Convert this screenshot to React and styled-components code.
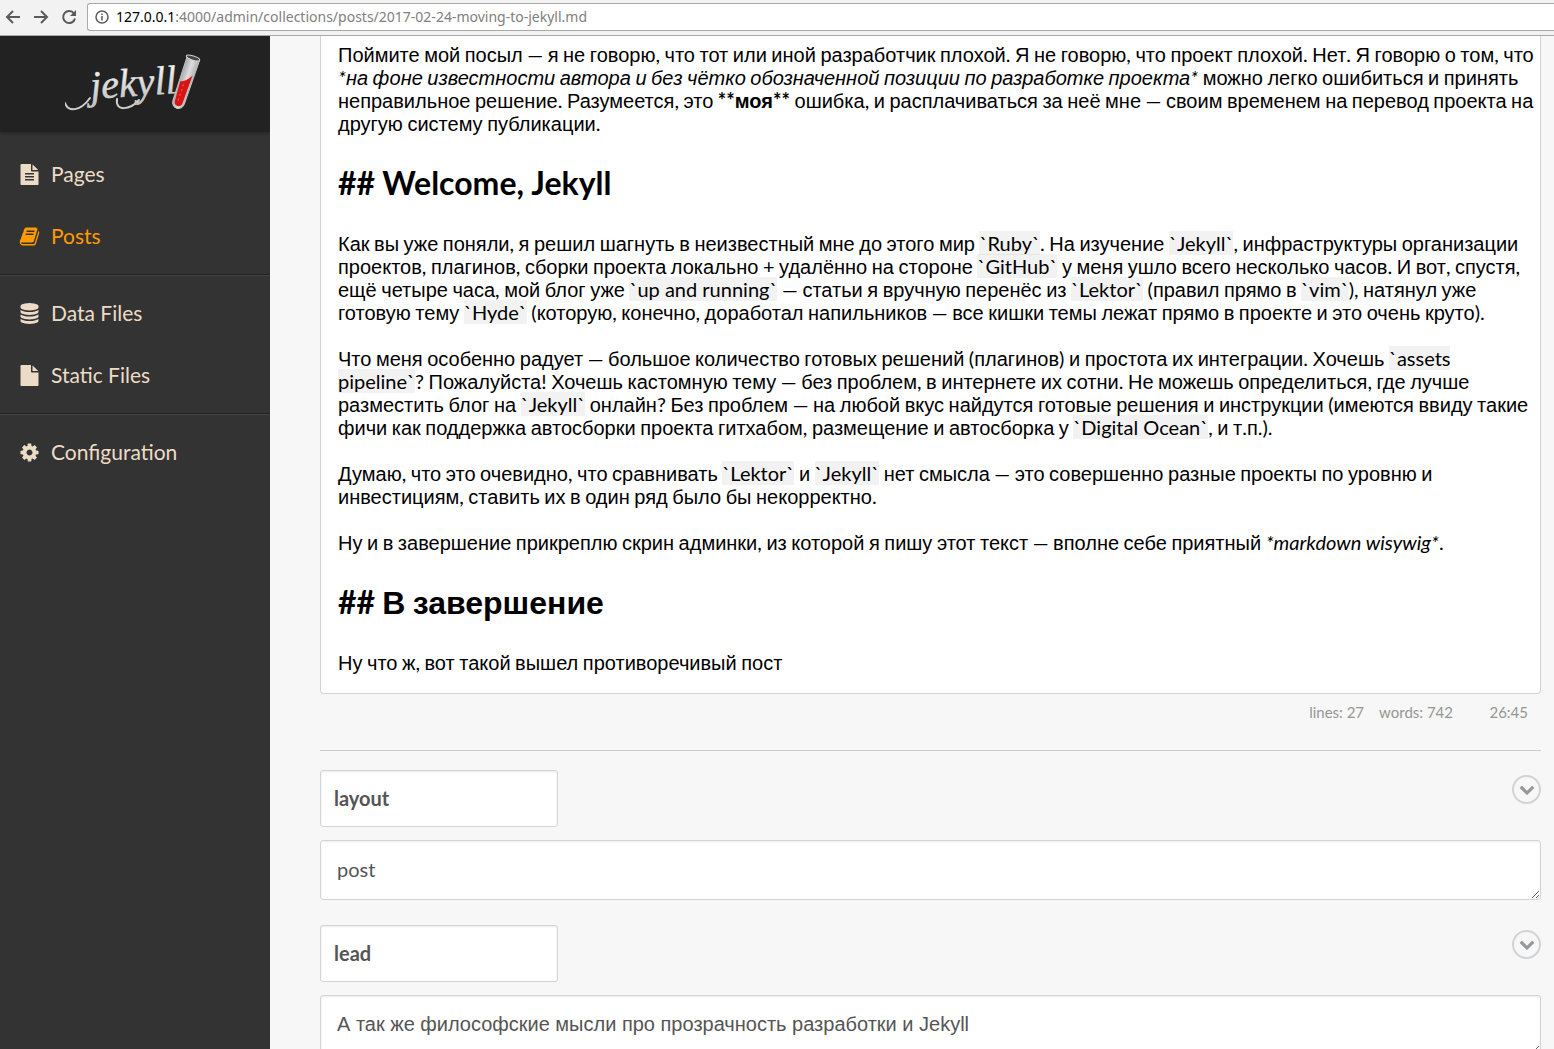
import React from 'react';
import styled, { createGlobalStyle } from 'styled-components';

const GlobalStyle = createGlobalStyle`
  *, *::before, *::after { box-sizing: border-box; }
  html, body { margin: 0; padding: 0; }
  body {
    background: #f7f7f7;
    color: #555;
    font-family: Lato, 'Liberation Sans', sans-serif;
    font-size: 20px;
  }
`;

const Screen = styled.div`
  display: flex;
  flex-direction: column;
  height: 100vh;
  overflow: hidden;
`;

/* ---------- browser bar ---------- */

const BrowserBar = styled.header`
  flex: none;
  display: flex;
  align-items: center;
  height: 36px;
  padding: 0 0 2px 5px;
  background: #f2f2f2;
  border-bottom: 1px solid #a9a9a9;
`;

const BarButton = styled.button`
  display: grid;
  place-items: center;
  width: 16px;
  height: 16px;
  margin-right: 12px;
  padding: 0;
  border: 0;
  background: none;
`;

const AddressBox = styled.div`
  flex: 1;
  display: flex;
  align-items: center;
  gap: 7px;
  height: 28px;
  margin-left: -2px;
  padding-left: 7px;
  border: 1px solid #a9a9a9;
  border-right: 0;
  border-radius: 3px 0 0 3px;
  background: #fff;
`;

const Address = styled.span`
  color: #808080;
  font: 14px/20px 'Noto Sans', sans-serif;
`;

const Host = styled.span`
  color: #000;
`;

/* ---------- sidebar ---------- */

const Body = styled.div`
  flex: 1;
  display: flex;
  min-height: 0;
`;

const Sidebar = styled.aside`
  flex: none;
  width: 270px;
  overflow: hidden;
  background: #333;
`;

const LogoLink = styled.a`
  display: flex;
  justify-content: center;
  height: 96px;
  padding-top: 16px;
  background: #222;
  box-shadow: 0 1px 3px #222;
`;

const NavGroup = styled.ul`
  margin: 0;
  padding: 7px 0;
  list-style: none;
  border-bottom: ${(p) => (p.$last ? 'none' : '1px solid #222')};
  box-shadow: ${(p) => (p.$last ? 'none' : '0 1px 0 #444')};

  &:first-of-type { padding-top: 11px; }
`;

const NavLink = styled.a`
  display: flex;
  align-items: center;
  gap: 11px;
  height: 62px;
  padding-left: 19px;
  color: ${(p) => (p.$active ? '#ff9a00' : '#ecdcc6')};
  font-size: 21px;
  line-height: 26px;
  text-decoration: none;
`;

/* ---------- editor ---------- */

const Main = styled.main`
  flex: 1;
  min-width: 0;
  padding: 0 13px 0 50px;
  overflow: hidden;
`;

const Editor = styled.div`
  padding: 8px 2px 18px 17px;
  border: 1px solid #d0d4d7;
  border-top: 0;
  border-radius: 0 0 4px 4px;
  background: #fff;
  color: #000;
  font-family: Carlito, Lato, sans-serif;
  outline: none;
`;

const Line = styled.p`
  margin: 0 0 23px;
  line-height: 23px;

  &:last-child { margin-bottom: 0; }
`;

const HeadingLine = styled.h2`
  margin: 0 0 23px;
  font-size: 32px;
  line-height: 51px;
  font-weight: 700;
`;

const Latin = styled.span`
  font-family: Lato, sans-serif;
  line-height: 1;
`;

const Cyrillic = styled.span`
  font-family: 'Liberation Sans', sans-serif;
  line-height: 1;
`;

const CodeMark = styled.code`
  background: rgba(0, 0, 0, 0.05);
  font-family: Lato, sans-serif;
  font-size: 20px;
  line-height: 1;
`;

const StatusBar = styled.div`
  display: flex;
  justify-content: flex-end;
  gap: 15px;
  padding: 7px 13px 9px;
  color: #959694;
  font-size: 15px;
  line-height: 22px;
`;

const CursorPosition = styled.span`
  min-width: 60px;
  text-align: right;
`;

const Divider = styled.hr`
  height: 1px;
  margin: 18px 0 19px;
  border: 0;
  background: #ccc;
`;

/* ---------- metadata fields ---------- */

const Field = styled.div`
  margin-bottom: 25px;
`;

const FieldHead = styled.div`
  display: flex;
  align-items: flex-start;
  justify-content: space-between;
  margin-bottom: 13px;
`;

const KeyInput = styled.input`
  width: 238px;
  height: 57px;
  padding: 0 13px 2px;
  border: 1px solid #d0d4d7;
  border-radius: 3px;
  background: #fff;
  box-shadow: inset 0 1px 2px rgba(0, 0, 0, 0.08);
  color: #555;
  font: 700 20px Lato, sans-serif;
`;

const ValueArea = styled.textarea`
  display: block;
  width: 100%;
  height: 60px;
  padding: 16px;
  border: 1px solid #d0d4d7;
  border-radius: 3px;
  background: #fff;
  box-shadow: inset 0 1px 2px rgba(0, 0, 0, 0.08);
  color: #555;
  font-family: ${(p) => (p.$cyrillic ? "'Liberation Sans'" : 'Lato')}, sans-serif;
  font-size: 20px;
  line-height: 24px;
  resize: vertical;
  overflow: hidden;
`;

const TypeButton = styled.button`
  display: grid;
  place-items: center;
  width: 29px;
  height: 29px;
  margin-top: 5px;
  padding: 0 0 1px;
  border: 2px solid #d0d4d7;
  border-radius: 50%;
  background: none;
  color: #96999c;
`;

/* ---------- drawings ---------- */

const ICONS = {
  pages:
    'M1596 476q14 14 28 36h-472v-472q22 14 36 28zm-476 164h544v1056q0 40-28 68t-68 28h-1344q-40 0-68-28t-28-68v-1600q0-40 28-68t68-28h800v544q0 40 28 68t68 28zm160 736v-64q0-14-9-23t-23-9h-704q-14 0-23 9t-9 23v64q0 14 9 23t23 9h704q14 0 23-9t9-23zm0-256v-64q0-14-9-23t-23-9h-704q-14 0-23 9t-9 23v64q0 14 9 23t23 9h704q14 0 23-9t9-23zm0-256v-64q0-14-9-23t-23-9h-704q-14 0-23 9t-9 23v64q0 14 9 23t23 9h704q14 0 23-9t9-23z',
  posts:
    'M1703 478q40 57 18 129l-275 906q-19 64-76.5 107.5t-122.5 43.5h-923q-77 0-148.5-53.5t-99.5-131.5q-24-67-2-127 0-4 3-27t4-37q1-8-3-21.5t-3-19.5q2-11 8-21t16.5-23.5 16.5-23.5q23-38 45-91.5t30-91.5q3-10 .5-30t-.5-28q3-11 17-28t17-23q21-36 42-92t25-90q1-9-2.5-32t.5-28q4-13 22-30.5t22-22.5q19-26 42.5-84.5t27.5-96.5q1-8-3-25.5t-2-26.5q2-8 9-18t18-23 17-21q8-12 16.5-30.5t15-35 16-36 19.5-32 26.5-23.5 36-11.5 47.5 5.5l-1 3q38-9 51-9h761q74 0 114 56t18 130l-274 906q-36 119-71.5 153.5t-128.5 34.5h-869q-27 0-38 15-11 16-1 43 24 70 144 70h923q29 0 56-15.5t35-41.5l300-987q7-22 5-57 38 15 59 43zm-1064 2q-4 13 2 22.5t20 9.5h608q13 0 25.5-9.5t16.5-22.5l21-64q4-13-2-22.5t-20-9.5h-608q-13 0-25.5 9.5t-16.5 22.5zm-83 256q-4 13 2 22.5t20 9.5h608q13 0 25.5-9.5t16.5-22.5l21-64q4-13-2-22.5t-20-9.5h-608q-13 0-25.5 9.5t-16.5 22.5z',
  data:
    'M896 768q237 0 443-43t325-127v170q0 69-103 128t-280 93.5-385 34.5-385-34.5-280-93.5-103-128v-170q119 84 325 127t443 43zm0 768q237 0 443-43t325-127v170q0 69-103 128t-280 93.5-385 34.5-385-34.5-280-93.5-103-128v-170q119 84 325 127t443 43zm0-384q237 0 443-43t325-127v170q0 69-103 128t-280 93.5-385 34.5-385-34.5-280-93.5-103-128v-170q119 84 325 127t443 43zm0-1152q208 0 385 34.5t280 93.5 103 128v128q0 69-103 128t-280 93.5-385 34.5-385-34.5-280-93.5-103-128v-128q0-69 103-128t280-93.5 385-34.5z',
  file:
    'M1152 512v-472q22 14 36 28l408 408q14 14 28 36h-472zm-128 32q0 40 28 68t68 28h544v1056q0 40-28 68t-68 28h-1344q-40 0-68-28t-28-68v-1600q0-40 28-68t68-28h800v544z',
  cog:
    'M1152 896q0-106-75-181t-181-75-181 75-75 181 75 181 181 75 181-75 75-181zm512-109v222q0 12-8 23t-20 13l-185 28q-19 54-39 91 35 50 107 138 10 12 10 25t-9 23q-27 37-99 108t-94 71q-12 0-26-9l-138-108q-44 23-91 38-16 136-29 186-7 28-36 28h-222q-14 0-24.5-8.5t-11.5-21.5l-28-184q-49-16-90-37l-141 107q-10 9-25 9-14 0-25-11-126-114-165-168-7-10-7-23 0-12 8-23 15-21 51-66.5t54-70.5q-27-50-41-99l-183-27q-13-2-21-12.5t-8-23.5v-222q0-12 8-23t19-13l186-28q14-46 39-92-40-57-107-138-10-12-10-24 0-10 9-23 26-36 98.5-107.5t94.5-71.5q13 0 26 10l138 107q44-23 91-38 16-136 29-186 7-28 36-28h222q14 0 24.5 8.5t11.5 21.5l28 184q49 16 90 37l142-107q9-9 24-9 13 0 25 10 129 119 165 170 7 8 7 22 0 12-8 23-15 21-51 66.5t-54 70.5q26 50 41 98l183 28q13 2 21 12.5t8 23.5z',
  chevron:
    'M1683 808l-742 741q-19 19-45 19t-45-19l-742-741q-19-19-19-45.5t19-45.5l166-165q19-19 45-19t45 19l531 531 531-531q19-19 45-19t45 19l166 165q19 19 19 45.5t-19 45.5z',
};

const Icon = ({ name, size }) => (
  <svg width={size} height={size} viewBox="0 0 1792 1792" fill="currentColor" aria-hidden="true">
    <path d={ICONS[name]} />
  </svg>
);

const BarIcon = ({ children }) => (
  <svg width="16" height="16" viewBox="0 0 16 16" fill="none" stroke="#5a5a5a" strokeWidth="2" aria-hidden="true">
    {children}
  </svg>
);

const Logo = () => (
  <svg width="140" height="64" viewBox="0 0 140 64" role="img" aria-label="jekyll">
    <defs>
      <linearGradient id="silver" x1="0" y1="0" x2="0" y2="1">
        <stop offset="0" stopColor="#fff" />
        <stop offset="1" stopColor="#bbb" />
      </linearGradient>
      <linearGradient id="glass" x1="0" y1="0" x2="1" y2="0">
        <stop offset="0" stopColor="#a8a8a8" />
        <stop offset="0.5" stopColor="#dedede" />
        <stop offset="1" stopColor="#b0b0b0" />
      </linearGradient>
    </defs>
    <g fill="none" stroke="#cfcfcf" strokeWidth="2" strokeLinecap="round">
      <path d="M0 51C3 60 15 60 25 46" />
      <path d="M52 47C50 60 65 58 74 48" />
    </g>
    <text
      x="26"
      y="47"
      transform="rotate(-4 26 47)"
      fill="url(#silver)"
      stroke="#ddd"
      strokeWidth="0.500"
      fontFamily="'Liberation Serif', serif"
      fontStyle="italic"
      fontSize="40"
    >
      jekyll
    </text>
    <g transform="translate(128 6) rotate(18)">
      <path d="M-6 0L-6 46C-6 55 6 55 6 46L7 0Z" fill="url(#glass)" stroke="#c4c4c4" strokeWidth="1" />
      <path d="M-5 26Q0 25 5 17L4 46C4 52-4 52-4 46Z" fill="#d91414" />
      <path d="M-1 28V47" stroke="#f06050" strokeWidth="1" strokeDasharray="2 3" />
      <ellipse cx="0" cy="0" rx="7" ry="2" fill="#444" stroke="#d0d0d0" strokeWidth="1" />
    </g>
  </svg>
);

/* Cyrillic words and everything else take separate faces; the blanks belong to the line. */
const Mixed = ({ children }) =>
  children.split(/([А-Яа-яЁё]+|[^А-Яа-яЁё\s]+)/).map((part, i) => {
    if (i % 2 === 0) return part;
    return /[А-Яа-яЁё]/.test(part) ? <Cyrillic key={i}>{part}</Cyrillic> : <Latin key={i}>{part}</Latin>;
  });

const Code = ({ children }) =>
  children.split(/(?<=\s)/).map((word, i) => <CodeMark key={i}>{word}</CodeMark>);

/* Highlights markdown source: `code`, **strong** and *emphasis* keep their marks. */
const Markdown = ({ source }) =>
  source.split(/(`[^`]+`|\*\*[^*]+\*\*|\*[^*]+\*)/).map((part, i) => {
    if (part.startsWith('`')) return <Code key={i}>{part}</Code>;
    const text = <Mixed key={i}>{part}</Mixed>;
    if (part.startsWith('**')) return <strong key={i}>{text}</strong>;
    if (part.startsWith('*')) return <em key={i}>{text}</em>;
    return text;
  });

const POST = [
  'Поймите мой посыл — я не говорю, что тот или иной разработчик плохой. Я не говорю, что проект плохой. Нет. Я говорю о том, что *на фоне известности автора и без чётко обозначенной позиции по разработке проекта* можно легко ошибиться и принять неправильное решение. Разумеется, это **моя** ошибка, и расплачиваться за неё мне — своим временем на перевод проекта на другую систему публикации.',
  '## Welcome, Jekyll',
  'Как вы уже поняли, я решил шагнуть в неизвестный мне до этого мир `Ruby`. На изучение `Jekyll`, инфраструктуры организации проектов, плагинов, сборки проекта локально + удалённо на стороне `GitHub` у меня ушло всего несколько часов. И вот, спустя, ещё четыре часа, мой блог уже `up and running` — статьи я вручную перенёс из `Lektor` (правил прямо в `vim`), натянул уже готовую тему `Hyde` (которую, конечно, доработал напильников — все кишки темы лежат прямо в проекте и это очень круто).',
  'Что меня особенно радует — большое количество готовых решений (плагинов) и простота их интеграции. Хочешь `assets pipeline`? Пожалуйста! Хочешь кастомную тему — без проблем, в интернете их сотни. Не можешь определиться, где лучше разместить блог на `Jekyll` онлайн? Без проблем — на любой вкус найдутся готовые решения и инструкции (имеются ввиду такие фичи как поддержка автосборки проекта гитхабом, размещение и автосборка у `Digital Ocean`, и т.п.).',
  'Думаю, что это очевидно, что сравнивать `Lektor` и `Jekyll` нет смысла — это совершенно разные проекты по уровню и инвестициям, ставить их в один ряд было бы некорректно.',
  'Ну и в завершение прикреплю скрин админки, из которой я пишу этот текст — вполне себе приятный *markdown wisywig*.',
  '## В завершение',
  'Ну что ж, вот такой вышел противоречивый пост',
];

const NAV = [
  [
    { icon: 'pages', label: 'Pages' },
    { icon: 'posts', label: 'Posts', active: true },
  ],
  [
    { icon: 'data', label: 'Data Files' },
    { icon: 'file', label: 'Static Files' },
  ],
  [{ icon: 'cog', label: 'Configuration' }],
];

const FIELDS = [
  { name: 'layout', value: 'post' },
  { name: 'lead', value: 'А так же философские мысли про прозрачность разработки и Jekyll' },
];

export default function App() {
  return (
    <Screen>
      <GlobalStyle />
      <BrowserBar>
        <BarButton aria-label="Back">
          <BarIcon><path d="M15 8H2M8 2L2 8l6 6" /></BarIcon>
        </BarButton>
        <BarButton aria-label="Forward">
          <BarIcon><path d="M1 8h13M8 2l6 6-6 6" /></BarIcon>
        </BarButton>
        <BarButton aria-label="Reload">
          <BarIcon>
            <path d="M13 4.500A6 6 0 1 0 14 9.500" />
            <path d="M15 1v6H9z" fill="#5a5a5a" stroke="none" />
          </BarIcon>
        </BarButton>
        <AddressBox>
          <svg width="14" height="14" viewBox="0 0 14 14" fill="none" stroke="#5a5a5a" aria-hidden="true">
            <circle cx="7" cy="7" r="6" strokeWidth="1.500" />
            <path d="M7 6v4.500M7 3.500v1.500" strokeWidth="1.500" />
          </svg>
          <Address>
            <Host>127.0.0.1</Host>:4000/admin/collections/posts/2017-02-24-moving-to-jekyll.md
          </Address>
        </AddressBox>
      </BrowserBar>
      <Body>
        <Sidebar>
          <LogoLink href="#home" aria-label="jekyll">
            <Logo />
          </LogoLink>
          <nav>
            {NAV.map((group, i) => (
              <NavGroup key={i} $last={i === NAV.length - 1}>
                {group.map((item) => (
                  <li key={item.label}>
                    <NavLink href={`#${item.icon}`} $active={item.active}>
                      <Icon name={item.icon} size={21} />
                      {item.label}
                    </NavLink>
                  </li>
                ))}
              </NavGroup>
            ))}
          </nav>
        </Sidebar>
        <Main>
          <Editor role="textbox" aria-multiline="true" aria-label="Body" tabIndex={0}>
            {POST.map((source) =>
              source.startsWith('## ') ? (
                <HeadingLine key={source}><Mixed>{source}</Mixed></HeadingLine>
              ) : (
                <Line key={source}><Markdown source={source} /></Line>
              )
            )}
          </Editor>
          <StatusBar>
            <span>lines: 27</span>
            <span>words: 742</span>
            <CursorPosition>26:45</CursorPosition>
          </StatusBar>
          <Divider />
          {FIELDS.map((field) => (
            <Field key={field.name}>
              <FieldHead>
                <KeyInput aria-label={`${field.name} key`} defaultValue={field.name} />
                <TypeButton aria-label={`Change type of ${field.name}`}>
                  <Icon name="chevron" size={16} />
                </TypeButton>
              </FieldHead>
              <ValueArea
                aria-label={`${field.name} value`}
                defaultValue={field.value}
                $cyrillic={/[А-Яа-я]/.test(field.value)}
              />
            </Field>
          ))}
        </Main>
      </Body>
    </Screen>
  );
}
